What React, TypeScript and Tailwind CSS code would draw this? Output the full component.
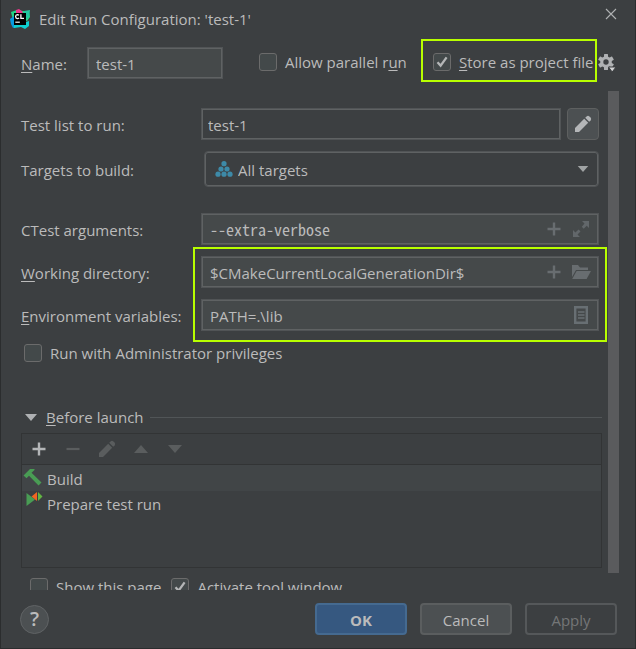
import React, { ReactNode } from "react";

const fieldBox =
  "flex h-8 min-w-0 flex-1 items-center border border-[#515456] bg-[#45494a] inset-ring inset-ring-[#5f6263]";
const fieldText = "min-w-0 flex-1 bg-transparent pt-px text-[#bbbbbb] outline-none";
const iconButton = "grid shrink-0 place-items-center";

function Mnemonic({ text }: { text: string }) {
  const [before, key, after] = text.split("_");
  if (key === undefined) return <>{text}</>;
  return (
    <>
      {before}
      <span className="underline decoration-1 underline-offset-2">{key}</span>
      {after}
    </>
  );
}

function Check({ id, label, checked = false }: { id: string; label: string; checked?: boolean }) {
  return (
    <div className="flex items-center gap-2">
      <span className="grid h-[18px] w-[18px] shrink-0">
        <input
          id={id}
          type="checkbox"
          defaultChecked={checked}
          className="peer col-start-1 row-start-1 h-[18px] w-[18px] appearance-none rounded-[3px] border border-[#6b6b6b] bg-[#43494a]"
        />
        <svg
          viewBox="0 0 18 18"
          className="pointer-events-none invisible col-start-1 row-start-1 h-[18px] w-[18px] peer-checked:visible"
        >
          <path d="M4.5 9.3L7.6 12.6L13.6 4.4" fill="none" stroke="#b4b6b7" strokeWidth="2.3" />
        </svg>
      </span>
      <label htmlFor={id} className="whitespace-nowrap">
        <Mnemonic text={label} />
      </label>
    </div>
  );
}

function Row({ id, label, children }: { id: string; label: string; children: ReactNode }) {
  return (
    <div className="flex items-center">
      <label htmlFor={id} className="w-[180px] shrink-0 pt-[2px] whitespace-nowrap">
        <Mnemonic text={label} />
      </label>
      {children}
    </div>
  );
}

function Plus({ className }: { className: string }) {
  return (
    <svg viewBox="0 0 14 14" className={`h-[14px] w-[14px] ${className}`}>
      <path d="M7 0.5V13.5M0.5 7H13.5" stroke="currentColor" strokeWidth="2.4" />
    </svg>
  );
}

function Pencil() {
  return (
    <svg viewBox="0 0 18 18" className="h-[18px] w-[18px]" fill="currentColor">
      <path d="M1 17V13L10.2 3.8L14.2 7.8L5 17Z" />
      <path d="M11.2 2.8L12.6 1.4Q14 0.2 15.4 1.4L16.6 2.6Q17.8 4 16.6 5.4L15.2 6.8Z" />
    </svg>
  );
}

function Triangle({ up = false, className }: { up?: boolean; className: string }) {
  return (
    <svg viewBox="0 0 14 8" className={className} fill="currentColor">
      <path d={up ? "M0 8L7 0L14 8Z" : "M0 0H14L7 8Z"} />
    </svg>
  );
}

function AppLogo() {
  return (
    <svg viewBox="0 0 20 20" className="h-5 w-5" aria-hidden="true">
      <path d="M1 3L7 1L13 2L19 2L20 8L17 12L10 10L3 11Z" fill="#21d789" />
      <path d="M6 1L9 0L13 3L10 7L6 5Z" fill="#ed358c" />
      <path d="M0 10L4 7L6 18L3 19L1 15Z" fill="#079ae0" />
      <path d="M14 2L20 1L19 8L16 10Z" fill="#22c6a0" />
      <path d="M4 15L16 13L19 12L19 17L15 20L11 18L4 19Z" fill="#0ecfd0" />
      <path d="M4 4H16V16H4Z" fill="#000" />
      <path d="M9 6.3Q8.3 5.6 7.4 5.6Q5.6 5.7 5.6 7.6Q5.6 9.5 7.4 9.6Q8.4 9.6 9 8.8M10.9 5.2V9.4H14" fill="none" stroke="#fff" strokeWidth="1.3" />
      <path d="M5.3 13.2H9.8" stroke="#fff" strokeWidth="1.2" />
    </svg>
  );
}

function Gear() {
  return (
    <svg viewBox="0 0 18 18" className="h-[18px] w-[18px]">
      <g fill="#afb1b3">
        <circle cx="8" cy="8" r="5.8" />
        {[0, 60, 120].map((a) => (
          <rect key={a} x="6" y="0" width="4" height="16" rx="0.5" transform={`rotate(${a} 8 8)`} />
        ))}
      </g>
      <circle cx="8" cy="8" r="2.7" fill="#3c3f41" />
      <path d="M10.5 13H18L14.2 18Z" fill="#d2d3d4" stroke="#3c3f41" strokeWidth="1" />
    </svg>
  );
}

export default function App() {
  return (
    <main className="flex h-screen flex-col border-x border-b border-[#2b2d2e] bg-[#3c3f41] font-['Open_Sans','Noto_Sans',sans-serif] text-[15px] leading-5 text-[#bbbbbb]">
      <header className="flex h-[38px] shrink-0 items-center gap-[9px] pr-[18px] pl-[9px]">
        <AppLogo />
        <h1 className="flex-1 whitespace-nowrap">Edit Run Configuration: 'test-1'</h1>
        <button aria-label="Close" className={`${iconButton} mb-[10px]`}>
          <svg viewBox="0 0 12 12" className="h-3 w-3">
            <path d="M1 1L11 11M11 1L1 11" stroke="#b0b2b3" strokeWidth="1.1" />
          </svg>
        </button>
      </header>

      <section className="mt-px flex h-[52px] shrink-0 items-start pr-[19px] pl-5">
        <div className="mt-2 flex items-center">
          <label htmlFor="name" className="w-[66px] pt-[2px]">
            <Mnemonic text="_N_ame:" />
          </label>
          <input
            id="name"
            defaultValue="test-1"
            className="h-8 w-[136px] border border-[#515456] bg-[#45494a] px-2 pt-px text-[#bbbbbb] inset-ring inset-ring-[#5f6263] outline-none"
          />
        </div>
        <div className="mt-[13px] ml-9">
          <Check id="parallel" label="Allow parallel r_u_n" />
        </div>
        <div className="ml-auto flex items-center">
          <div className="flex h-[43px] w-44 items-center border-2 border-[#b8ff00] pt-[3px] pl-[10px]">
            <Check id="store" label="_S_tore as project file" checked />
          </div>
          <button aria-label="Storage options" className={`${iconButton} mt-1 ml-px`}>
            <Gear />
          </button>
        </div>
      </section>

      <div className="flex min-h-0 flex-1 pr-4">
        <div className="min-w-0 flex-1 overflow-hidden pr-[6px] pl-5">
          <form className="mr-[3px] pt-[17px]" onSubmit={(e) => e.preventDefault()}>
            <Row id="tests" label="Test list to run:">
              <input
                id="tests"
                defaultValue="test-1"
                className="h-8 min-w-0 flex-1 border border-[#515456] bg-transparent px-[6px] pt-px text-[#bbbbbb] inset-ring inset-ring-[#5f6263] outline-none"
              />
              <button
                type="button"
                aria-label="Edit test list"
                className={`${iconButton} ml-[6px] h-8 w-8 rounded-[4px] border border-[#5e6060] bg-[#4c5052] text-[#b4b6b8]`}
              >
                <Pencil />
              </button>
            </Row>

            <div className="mt-[11px]">
              <Row id="targets" label="Targets to build:">
                <div className="ml-[3px] flex h-9 min-w-0 flex-1 items-center rounded-[4px] border border-[#515456] pr-[9px] pl-[10px] inset-ring inset-ring-[#5f6263]">
                  <svg viewBox="0 0 18 16" className="h-4 w-[18px] shrink-0" fill="#3d8aa8">
                    {[[9, 2.7], [6, 8], [12, 8], [3, 13.2], [9, 13.2], [15, 13.2]].map(([x, y]) => (
                      <circle key={`${x}-${y}`} cx={x} cy={y} r="2.6" />
                    ))}
                  </svg>
                  <select id="targets" className="ml-[5px] min-w-0 flex-1 appearance-none bg-transparent pt-[2px] outline-none">
                    <option>All targets</option>
                  </select>
                  <Triangle className="h-[6px] w-3 text-[#a0a3a4]" />
                </div>
              </Row>
            </div>

            <div className="mt-[26px]">
              <Row id="args" label="CTest arguments:">
                <div className={`${fieldBox} pr-[9px] pl-2`}>
                  <input
                    id="args"
                    defaultValue="--extra-verbose"
                    className="min-w-0 flex-1 bg-transparent font-['Noto_Sans_Mono_CJK_SC','DejaVu_Sans_Mono',monospace] text-base leading-5 text-[#bbbbbb] outline-none"
                  />
                  <button type="button" aria-label="Insert macro" className={`${iconButton} mr-3`}>
                    <Plus className="text-[#686d70]" />
                  </button>
                  <button type="button" aria-label="Expand" className={iconButton}>
                    <svg viewBox="0 0 16 16" className="h-4 w-4" fill="#62676a">
                      <path d="M9 0H16V7L13.7 4.7L10.7 7.7L8.8 5.8L11.5 2.5Z" />
                      <path d="M0 9V16H7L4.5 13.5L7.5 10.5L5.6 8.6L2.4 11.6Z" />
                    </svg>
                  </button>
                </div>
              </Row>
            </div>

            <div className="relative mt-[11px] flex flex-col gap-[11px]">
              <Row id="dir" label="_W_orking directory:">
                <div className={`${fieldBox} pr-[7px] pl-2`}>
                  <input id="dir" defaultValue="$CMakeCurrentLocalGenerationDir$" className={fieldText} />
                  <button type="button" aria-label="Insert macro" className={`${iconButton} mr-[10px]`}>
                    <Plus className="text-[#686d70]" />
                  </button>
                  <button type="button" aria-label="Browse" className={iconButton}>
                    <svg viewBox="0 0 20 16" className="h-4 w-5" fill="#686d70">
                      <path d="M1 13V1H7L9 3.5H17V6H5Z" />
                      <path d="M5.6 7H20L15.6 15H1.2Z" />
                    </svg>
                  </button>
                </div>
              </Row>
              <Row id="env" label="_E_nvironment variables:">
                <div className={`${fieldBox} pr-[10px] pl-2`}>
                  <input id="env" defaultValue="PATH=.\lib" className={fieldText} />
                  <button type="button" aria-label="Edit variables" className={iconButton}>
                    <svg viewBox="0 0 14 18" className="h-[18px] w-[14px]">
                      <path d="M1.2 1.2H12.8V16.8H1.2Z" fill="none" stroke="#686f73" strokeWidth="2.4" />
                      <path d="M4 6H10.5M4 9H10.5M4 12H10.5" stroke="#686f73" strokeWidth="1.5" />
                    </svg>
                  </button>
                </div>
              </Row>
              <div className="pointer-events-none absolute -top-[9px] -right-2 -bottom-[11px] left-[172px] border-2 border-[#b8ff00]" />
            </div>

            <div className="mt-3 ml-[3px]">
              <Check id="admin" label="Run with Administrator privileges" />
            </div>
          </form>

          <div className="mt-[44px] flex items-center pl-1">
            <button className="flex items-center gap-[9px]">
              <Triangle className="h-[7px] w-3 text-[#afb1b3]" />
              <span><Mnemonic text="_B_efore launch" /></span>
            </button>
            <hr className="ml-[6px] flex-1 border-[#515557]" />
          </div>

          <div className="mt-[6px] h-[135px] border border-[#323435]">
            <div className="flex h-[31px] items-center border-b border-[#323435] pl-[10px] text-[#5a5d5e]">
              <button aria-label="Add" className={iconButton}>
                <Plus className="text-[#b4b6b8]" />
              </button>
              <button aria-label="Remove" className={`${iconButton} ml-5`} disabled>
                <svg viewBox="0 0 14 14" className="h-[14px] w-[14px]">
                  <path d="M0.5 7H13.5" stroke="currentColor" strokeWidth="2.2" />
                </svg>
              </button>
              <button aria-label="Edit" className={`${iconButton} ml-[18px]`} disabled>
                <Pencil />
              </button>
              <button aria-label="Move up" className={`${iconButton} ml-[18px]`} disabled>
                <Triangle up className="h-2 w-[14px]" />
              </button>
              <button aria-label="Move down" className={`${iconButton} ml-5`} disabled>
                <Triangle className="h-2 w-[14px]" />
              </button>
            </div>
            <ul>
              <li className="flex h-[26px] items-center gap-[5px] bg-[#414547] pt-px pl-px">
                <svg viewBox="0 0 19 18" className="mb-1 h-[18px] w-[19px]">
                  <path d="M0.5 7.5L7 1H11.5V2L8.5 4.8L18.5 14.5L15.5 17.5L6 7.8L3.5 10.3Z" fill="#499c54" />
                </svg>
                Build
              </li>
              <li className="flex h-[25px] items-center gap-1 pl-1">
                <svg viewBox="0 0 17 14" className="mb-[10px] h-[14px] w-[17px]">
                  <path d="M0.5 1L9 7.5L0.5 14Z" fill="#499c54" />
                  <path d="M11 0V9L5.5 4.5Z" fill="#f26522" />
                  <path d="M12 0V9L16.5 4.5Z" fill="#62b543" />
                </svg>
                Prepare test run
              </li>
            </ul>
          </div>

          <div className="mt-[9px] flex gap-[10px] pl-[9px]">
            <Check id="show" label="Show this page" />
            <Check id="activate" label="Activate tool window" checked />
          </div>
        </div>
        <div className="mb-[17px] w-[11px] shrink-0 bg-[#5a5b5d]" />
      </div>

      <footer className="flex h-[58px] shrink-0 items-center gap-[13px] pr-[18px] pl-[19px]">
        <button
          aria-label="Help"
          className="mr-auto h-[29px] w-[29px] rounded-full border border-[#606365] bg-[#4c5052] text-[20px] leading-[26px] font-semibold"
        >
          ?
        </button>
        <button className="h-8 w-[92px] rounded-[4px] border-2 border-[#456a90] bg-[#365880] pt-[2px] font-bold">OK</button>
        <button className="h-8 w-[92px] rounded-[4px] border-2 border-[#5b5e5f] bg-[#4c5052] pt-[2px]">Cancel</button>
        <button disabled className="h-8 w-[92px] rounded-[4px] border-2 border-[#55585a] pt-[2px] text-[#747677]">
          Apply
        </button>
      </footer>
    </main>
  );
}
